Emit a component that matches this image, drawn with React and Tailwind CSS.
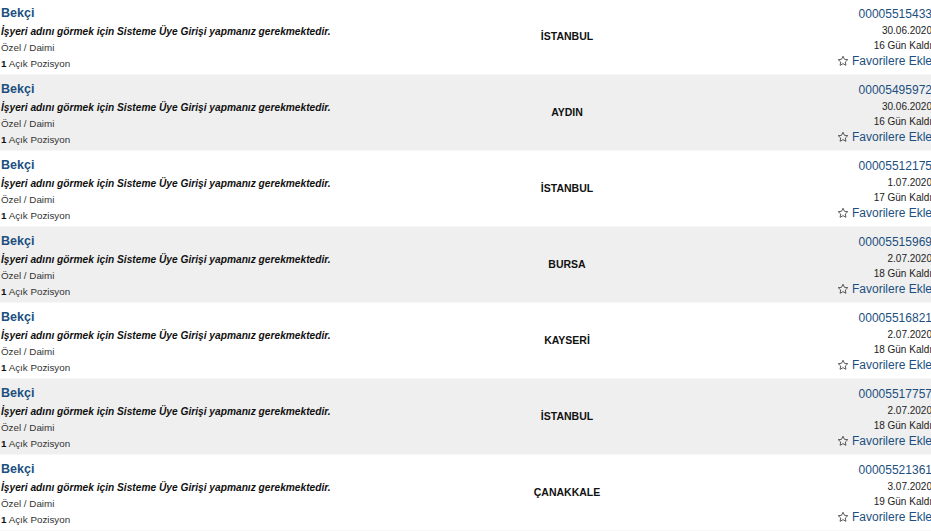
import React from 'react';

const ilanlar = [
  { no: "00005515433", sehir: "İSTANBUL", tarih: "30.06.2020", kalan: "16 Gün Kaldı" },
  { no: "00005495972", sehir: "AYDIN", tarih: "30.06.2020", kalan: "16 Gün Kaldı" },
  { no: "00005512175", sehir: "İSTANBUL", tarih: "1.07.2020", kalan: "17 Gün Kaldı" },
  { no: "00005515969", sehir: "BURSA", tarih: "2.07.2020", kalan: "18 Gün Kaldı" },
  { no: "00005516821", sehir: "KAYSERİ", tarih: "2.07.2020", kalan: "18 Gün Kaldı" },
  { no: "00005517757", sehir: "İSTANBUL", tarih: "2.07.2020", kalan: "18 Gün Kaldı" },
  { no: "00005521361", sehir: "ÇANAKKALE", tarih: "3.07.2020", kalan: "19 Gün Kaldı" },
]

const Yildiz = () => (
  <svg width="12" height="12" viewBox="0 0 24 24" fill="none" stroke="#333" strokeWidth="1.6" strokeLinejoin="round">
    <path d="M12 2.5l2.9 6.1 6.6.8-4.9 4.6 1.3 6.6L12 17.3l-5.9 3.3 1.3-6.6-4.9-4.6 6.6-.8z" />
  </svg>
)

function App() {
  return (
    <div className="w-[931px] h-[531px] overflow-hidden bg-white font-['Liberation_Sans',Arial,sans-serif]">
      <div className="w-[932px] -mt-[1px]">
        {ilanlar.map((item, i) => (
          <div key={item.no} className={`grid grid-cols-[428px_278px_1fr] h-[76px] border-b border-[#f7f7f7] ${i % 2 ? 'bg-[#efefef]' : 'bg-white'}`}>
            <div className="pl-[1px] pt-[5px] text-[#222]">
              <div className="text-[12.5px] font-bold text-[#1b4f80] leading-[18px] mb-[2px]">Bekçi</div>
              <div className="text-[10.2px] font-bold italic leading-[16px] text-[#111]">İşyeri adını görmek için Sisteme Üye Girişi yapmanız gerekmektedir.</div>
              <div className="text-[9.8px] leading-[16px] text-[#333]">Özel / Daimi</div>
              <div className="text-[9.8px] leading-[16px] text-[#333]"><b className="text-[#111]">1</b> Açık Pozisyon</div>
            </div>
            <div className="flex items-center justify-center text-[10.5px] font-bold text-[#111]">{item.sehir}</div>
            <div className="flex flex-col items-end pt-[6px]">
              <div className="text-[12px] leading-[18px] text-[#1b4f80]">{item.no}</div>
              <div className="text-[10px] leading-[15px] text-[#222]">{item.tarih}</div>
              <div className="text-[10px] leading-[15px] text-[#222]">{item.kalan}</div>
              <div className="flex items-center gap-[3px] text-[12px] leading-[16px] text-[#1b4f80]"><Yildiz />Favorilere Ekle</div>
            </div>
          </div>
        ))}
      </div>
    </div>
  )
}
export default App;
